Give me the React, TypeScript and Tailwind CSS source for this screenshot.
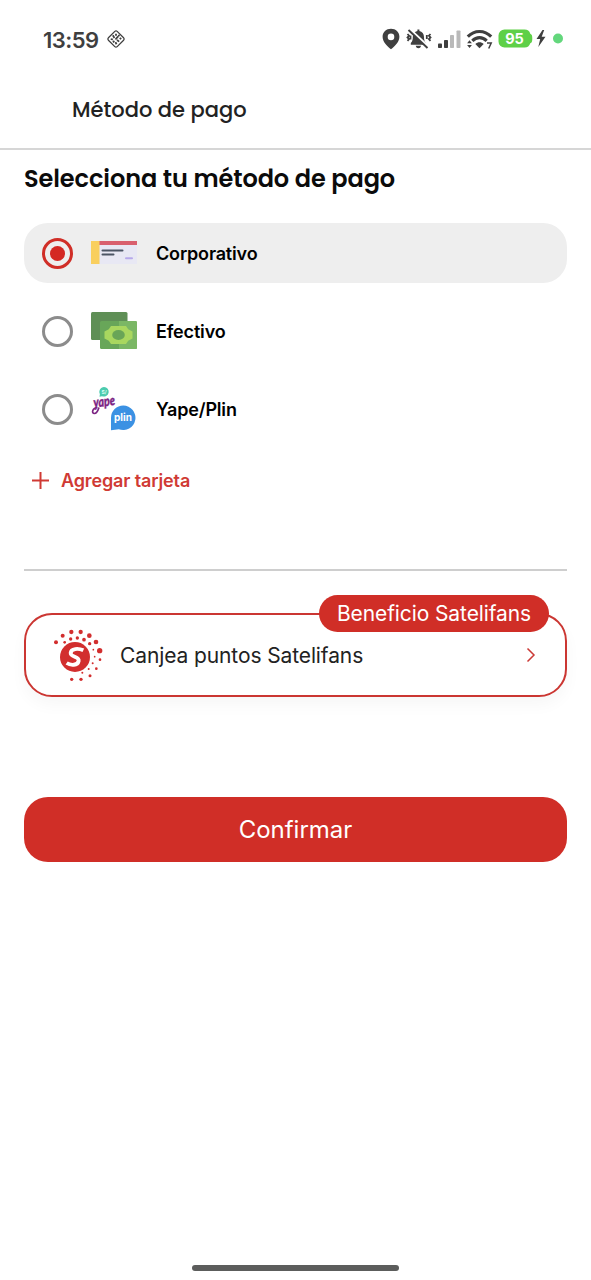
import type { ReactNode } from "react"

const dots = [
    [137, 246, 6], [157, 226, 6], [183, 215, 6.5], [211, 215, 6.5], [237, 226, 7], [257, 245, 7], [268, 271, 8],
    [163, 246, 4], [181, 236, 5], [201, 233, 5], [221, 238, 5.5], [238, 250, 5], [249, 268, 2.5],
    [253, 289, 2.5], [269, 298, 4], [258, 325, 4], [239, 346, 4.5], [212, 357, 5], [184, 357, 5],
    [247, 309, 3], [235, 326, 3], [216, 337, 3],
]

function StatusBar() {
    return (
        <div className="flex h-[78px] items-center justify-between pt-[2px] pl-[43px] pr-[27px] text-[#3f3f3f]">
            <div className="flex items-center gap-[8px]">
                <span className="font-['Inter'] text-[22px] font-semibold tracking-[-0.55px]">13:59</span>
                <svg width="20" height="20" viewBox="0 0 19 19" fill="none" stroke="currentColor" className="-mt-[2px]">
                    <rect x="3.6" y="3.6" width="11.8" height="11.8" rx="1.6" transform="rotate(45 9.5 9.5)" strokeWidth="1.2" />
                    <path d="M9.5 4.500v2M6.500 6l1.500 2.500M4.500 9.500l2 .5M9 10l2.500-3M10.500 10.500l2 1.500M13 8.500l1.500 1M9 12.500l1 2M6.500 12.500l1.500-1M12 5.500l.5 1.500" strokeWidth="1.700" />
                </svg>
            </div>
            <svg width="182" height="24" viewBox="0 0 182 24" fill="currentColor">
                <path fillRule="evenodd" d="M9 .800C4.200.800.6 4.200.6 8.800c0 4.700 4 9.100 8.400 12.500 4.400-3.400 8.400-7.800 8.400-12.500C17.400 4.200 13.800.800 9 .800ZM9 5.600a3.300 3.300 0 1 1 0 6.600A3.300 3.300 0 0 1 9 5.600Z" />
                <path d="M28.800 15c1.700-1.600 2-3.500 2-6 0-3.200 1.900-5.300 4.600-6V1.500h2V3c2.700.7 4.600 2.800 4.600 6 0 2.500.3 4.400 2 6v1.700H28.800ZM33.700 17.700h5.400c-.4 1.700-1.400 2.500-2.700 2.500s-2.300-.8-2.700-2.500Z" />
                <path d="M27.800 1.500 46 18.700" stroke="white" strokeWidth="3" />
                <path d="M26.500 2 45.500 20" stroke="currentColor" strokeWidth="1.900" />
                <path d="M25.500 6l1.600 1.700-1.600 1.700 1.600 1.700-1.600 1.700M28.500 7.500v4M48.500 6 46.900 7.700l1.600 1.700-1.600 1.700 1.600 1.700M44.800 7v4" fill="none" stroke="currentColor" strokeWidth="1.800" />
                <rect x="56" y="15.500" width="4" height="4.500" rx=".8" />
                <rect x="62" y="12" width="4" height="8" rx=".8" />
                <rect x="68" y="7" width="4" height="13" rx=".8" fill="#b9b9b9" />
                <rect x="74.500" y="2.500" width="4" height="17.500" rx=".8" fill="#b9b9b9" />
                <g fill="none" stroke="currentColor" strokeWidth="3.100">
                    <path d="M85.800 8.600C92.500 1.700 102.500 1.700 109.200 8.600" />
                    <path d="M90.300 12.800C94.500 8.600 100.500 8.600 104.700 12.800" />
                </g>
                <path d="M93.300 16c2.400-2.200 6-2.200 8.400 0L97.500 20.200Z" />
                <path d="M87.500 12.200l2.400 3h-4.800ZM87.500 20l2.400-3h-4.800Z" />
                <path d="M105 15h4.200l-2.500 5.500" fill="none" stroke="currentColor" strokeWidth="1.500" />
                <path d="M122.500 1.500h20a6 6 0 0 1 5.800 4.200c1.600.7 2 2 2 4.800s-.4 4.100-2 4.800a6 6 0 0 1-5.800 4.200h-20a6 6 0 0 1-6-6v-6a6 6 0 0 1 6-6Z" fill="#5ed047" />
                <text x="132.500" y="15.800" textAnchor="middle" fill="white" className="font-['Inter'] text-[14.500px] font-bold">95</text>
                <path d="M160.500 2 154.500 11h3.700L156.300 19 163.500 8.800h-3.800l2.500-6.800Z" />
                <circle cx="176" cy="10.500" r="5" fill="#63d77c" />
            </svg>
        </div>
    )
}

function CheckIcon() {
    return (
        <svg width="46" height="46" viewBox="0 0 46 46">
            <path d="M0 11h46v23H0z" fill="#e8e8f4" />
            <path d="M8 11h38v4H8z" fill="#d95f6e" />
            <path d="M0 11h8.500v23H0z" fill="#f9cf5e" />
            <path d="M11.500 20.500h20M11.500 24.500h11" stroke="#4c5565" strokeWidth="2" strokeLinecap="round" />
            <path d="M35 28.300h6" stroke="#b7a9ea" strokeWidth="2" strokeLinecap="round" />
        </svg>
    )
}

function CashIcon() {
    return (
        <svg width="46" height="46" viewBox="0 0 46 46">
            <rect y="4" width="36.500" height="28" rx="1.500" fill="#5f8f56" />
            <rect x="9" y="13" width="37" height="28" rx="1.500" fill="#68a659" />
            <path d="M28 13h16.500a1.500 1.500 0 0 1 1.500 1.500v25a1.500 1.500 0 0 1-1.500 1.500H28Z" fill="#7bb765" />
            <path d="M20 18h15l2.200 3.300 4.300 2.200v7l-4.300 2.200L35 36H20l-2.200-3.300-4.300-2.200v-7l4.300-2.200Z" fill="#a9d75f" />
            <ellipse cx="27.500" cy="27" rx="6.300" ry="5" fill="#69a557" />
        </svg>
    )
}

function YapePlinIcon() {
    return (
        <svg width="46" height="46" viewBox="0 0 46 46">
            <path d="M13 1a4.800 4.800 0 1 1-2 9.200L8.500 10.800l.4-2.700A4.800 4.800 0 0 1 13 1Z" fill="#4ccbae" />
            <text x="13.200" y="8" textAnchor="middle" fill="#d9fff3" className="font-['Inter'] text-[5px] font-bold">S/</text>
            <text transform="translate(3 21.500) rotate(-7)" fill="#7c2483" stroke="#7c2483" strokeWidth=".4" textLength="21.500" lengthAdjust="spacingAndGlyphs" className="font-['Lato'] text-[14px] font-black italic">yape</text>
            <path d="M6.500 21.500C1.500 21.500 0 27.500 3.500 27.500c2.500 0 3.500-3 4.500-6" fill="none" stroke="#7c2483" strokeWidth="1.700" />
            <path d="M32.300 19.500a12.300 12.300 0 1 1-4.500 23.800L20 44.200V31.800a12.300 12.300 0 0 1 12.300-12.300Z" fill="#3b91e3" />
            <text x="32" y="34.500" textAnchor="middle" fill="white" textLength="18" className="font-['Inter'] text-[10px] font-bold">plin</text>
        </svg>
    )
}

function Option({ label, icon, selected }: { label: string; icon: ReactNode; selected?: boolean }) {
    return (
        <div className={`flex h-[60px] items-center rounded-[24px] pl-[18px] ${selected ? "bg-[#eeeeee]" : ""}`}>
            <div className={`flex size-[31px] items-center justify-center rounded-full border-[3px] ${selected ? "border-[#d02e27]" : "border-[#8c8c8c]"}`}>
                {selected && <div className="size-[15px] rounded-full bg-[#d42823]" />}
            </div>
            <div className="ml-[18px]">{icon}</div>
            <span className="ml-[19px] text-[18px] font-semibold tracking-[-0.17px] text-black">{label}</span>
        </div>
    )
}

function SatelifansLogo() {
    return (
        <svg width="50" height="54" viewBox="128 203 150 162" fill="#d22e2e">
            <circle cx="194" cy="290" r="45" />
            {dots.map(([x, y, r], i) => <circle key={i} cx={x} cy={y} r={r} />)}
            <path d="M219 270C204 263 182 264 181 278 180 291 208 288 205 302 202 316 181 316 169 308" fill="none" stroke="white" strokeWidth="11.500" />
        </svg>
    )
}

export default function App() {
    return (
        <main className="flex h-[1280px] w-[591px] flex-col overflow-hidden bg-white font-['Inter',sans-serif]">
            <StatusBar />
            <header className="flex h-[72px] items-center border-b-2 border-[#d6d6d6] pb-[7px] pl-[72px]">
                <h1 className="font-['Poppins','Inter',sans-serif] text-[21px] leading-none font-medium text-[#222] [font-feature-settings:'cv11']">Método de pago</h1>
            </header>
            <div className="flex flex-col px-6">
                <h2 className="mt-[13px] h-[32px] whitespace-nowrap font-['Poppins','Inter',sans-serif] text-[24px] leading-[32px] font-semibold tracking-[-0.08px] text-[#0b0b0b] [font-feature-settings:'cv11']">Selecciona tu método de pago</h2>
                <div className="mt-[28px] flex flex-col gap-[18px]">
                    <Option label="Corporativo" icon={<CheckIcon />} selected />
                    <Option label="Efectivo" icon={<CashIcon />} />
                    <Option label="Yape/Plin" icon={<YapePlinIcon />} />
                </div>
                <button className="mt-[26px] flex h-[30px] items-center gap-[12px] pl-[8px] text-[18px] font-semibold tracking-[-0.13px] text-[#d03a34]">
                    <svg width="17" height="17" viewBox="0 0 17 17" stroke="currentColor" strokeWidth="2">
                        <path d="M8.500 0v17M0 8.500h17" />
                    </svg>
                    Agregar tarjeta
                </button>
                <hr className="mt-[74px] border-t-2 border-[#cecece]" />
                <div className="relative mt-[42px] flex h-[84px] items-center rounded-[28px] border-2 border-[#cb3632] pr-[29px] pl-[27px] shadow-[0_8px_16px_rgba(0,0,0,0.035)]">
                    <SatelifansLogo />
                    <span className="ml-[17px] flex-1 pt-[2px] text-[21px] tracking-[-0.11px] text-[#222]">Canjea puntos Satelifans</span>
                    <svg width="10" height="16" viewBox="0 0 10 16" fill="none" stroke="#cb3a36" strokeWidth="1.500">
                        <path d="M1.500 1.500 8 8l-6.500 6.500" />
                    </svg>
                    <span className="absolute -top-[20px] right-[16px] flex h-[37px] w-[230px] items-center justify-center rounded-full bg-[#d02e27] text-[21px] tracking-[-0.1px] text-white">Beneficio Satelifans</span>
                </div>
                <button className="mt-[100px] h-[65px] rounded-[24px] bg-[#d02e27] text-[24px] text-white">Confirmar</button>
            </div>
            <div className="mx-auto mt-auto mb-[9px] h-[6px] w-[207px] rounded-full bg-[#5c5d5c]" />
        </main>
    )
}
